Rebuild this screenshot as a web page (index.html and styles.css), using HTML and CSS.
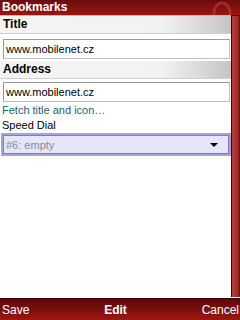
FILE: index.html
```html
<!DOCTYPE html>
<html>
<head>
<meta charset="utf-8">
<link rel="stylesheet" href="styles.css">
</head>
<body>
<div class="screen">
  <div class="titlebar">
    <span class="title-text">Bookmarks</span>
    <svg class="logo" width="22" height="15" viewBox="0 0 22 15">
      <ellipse cx="11" cy="13" rx="8" ry="10" fill="none" stroke="#c8403a" stroke-width="3" opacity="0.55"/>
    </svg>
  </div>
  <div class="main">
    <div class="content">
      <div class="section-head">Title</div>
      <div class="field field-first"><span>www.mobilenet.cz</span></div>
      <div class="section-head">Address</div>
      <div class="field"><span>www.mobilenet.cz</span></div>
      <div class="link">Fetch title and icon…</div>
      <div class="label">Speed Dial</div>
      <div class="select">
        <span class="select-text">#6: empty</span>
        <svg class="arrow" width="8" height="4" viewBox="0 0 8 4"><polygon points="0,0 8,0 4,4" fill="#000"/></svg>
      </div>
    </div>
    <div class="scrollbar"><div class="thumb"></div></div>
  </div>
  <div class="softkeys">
    <span class="sk sk-left">Save</span>
    <span class="sk sk-mid">Edit</span>
    <span class="sk sk-right">Cancel</span>
  </div>
</div>
</body>
</html>
```

FILE: styles.css
```css
html, body {
  margin: 0;
  padding: 0;
  background: #fff;
}
.screen {
  width: 240px;
  height: 320px;
  display: flex;
  flex-direction: column;
  font-family: "Liberation Sans", Arial, sans-serif;
  font-size: 11px;
  color: #000;
  overflow: hidden;
}
.titlebar {
  height: 15px;
  flex: none;
  position: relative;
  overflow: hidden;
  background: linear-gradient(to bottom, #6a0c0c 0%, #7e0f0d 40%, #9c1610 100%);
  display: flex;
  align-items: center;
}
.title-text {
  color: #fff;
  font-weight: bold;
  font-size: 12px;
  padding-left: 2px;
  line-height: 15px;
  margin-top: -1px;
}
.logo {
  position: absolute;
  right: 7px;
  top: 0;
}
.main {
  flex: 1;
  display: flex;
  min-height: 0;
}
.content {
  flex: 1;
  display: flex;
  flex-direction: column;
  background: #fff;
  border-top: 1px solid #b8b8b8;
}
.section-head {
  height: 17px;
  line-height: 17px;
  font-weight: bold;
  font-size: 12px;
  padding-left: 3px;
  background: linear-gradient(to right, #f4f4f4 0%, #f2f2f2 70%, #dcdcdc 85%, #c4c4c4 100%);
  border-bottom: 1px solid #d0d0d0;
}
.field {
  margin: 3px 1px 1px 3px;
  height: 18px;
  border: 1px solid #c0c0c0;
  border-top-color: #9a9a9a;
  border-left-color: #9a9a9a;
  display: flex;
  align-items: center;
  padding-left: 2px;
  font-size: 11px;
}
.field-first {
  margin-top: 5px;
  margin-bottom: 2px;
}
.link {
  color: #1f5f73;
  padding-left: 2px;
  height: 15px;
  line-height: 15px;
}
.label {
  padding-left: 2px;
  height: 14px;
  line-height: 14px;
}
.select {
  margin: 1px 0 0 1px;
  height: 19px;
  border: 2px solid #a4a4d8;
  outline: 1px solid #7e7eb8;
  outline-offset: -3px;
  background: #e6e6f8;
  display: flex;
  align-items: center;
  justify-content: space-between;
  padding: 0 11px 0 3px;
}
.select-text {
  color: #8a8aa0;
}
.arrow {
  display: block;
}
.scrollbar {
  width: 9px;
  flex: none;
  background: #fff;
  display: flex;
  padding-bottom: 1px;
}
.thumb {
  flex: 1;
  border-left: 1px solid #3a0606;
  border-top: 1px solid #3a0606;
  border-right: 1px solid #6e1414;
  background: linear-gradient(to right, #b84040 0%, #a83232 60%, #8c2020 100%);
}
.softkeys {
  height: 21px;
  flex: none;
  background: linear-gradient(to bottom, #5c0808 0%, #6e0c0c 30%, #a01610 100%);
  border-top: 1px solid #3a0404;
  display: flex;
  align-items: center;
  justify-content: space-between;
  color: #fff;
  font-size: 12px;
  padding: 0 1px 0 2px;
}
.sk-mid {
  font-weight: bold;
}
```
